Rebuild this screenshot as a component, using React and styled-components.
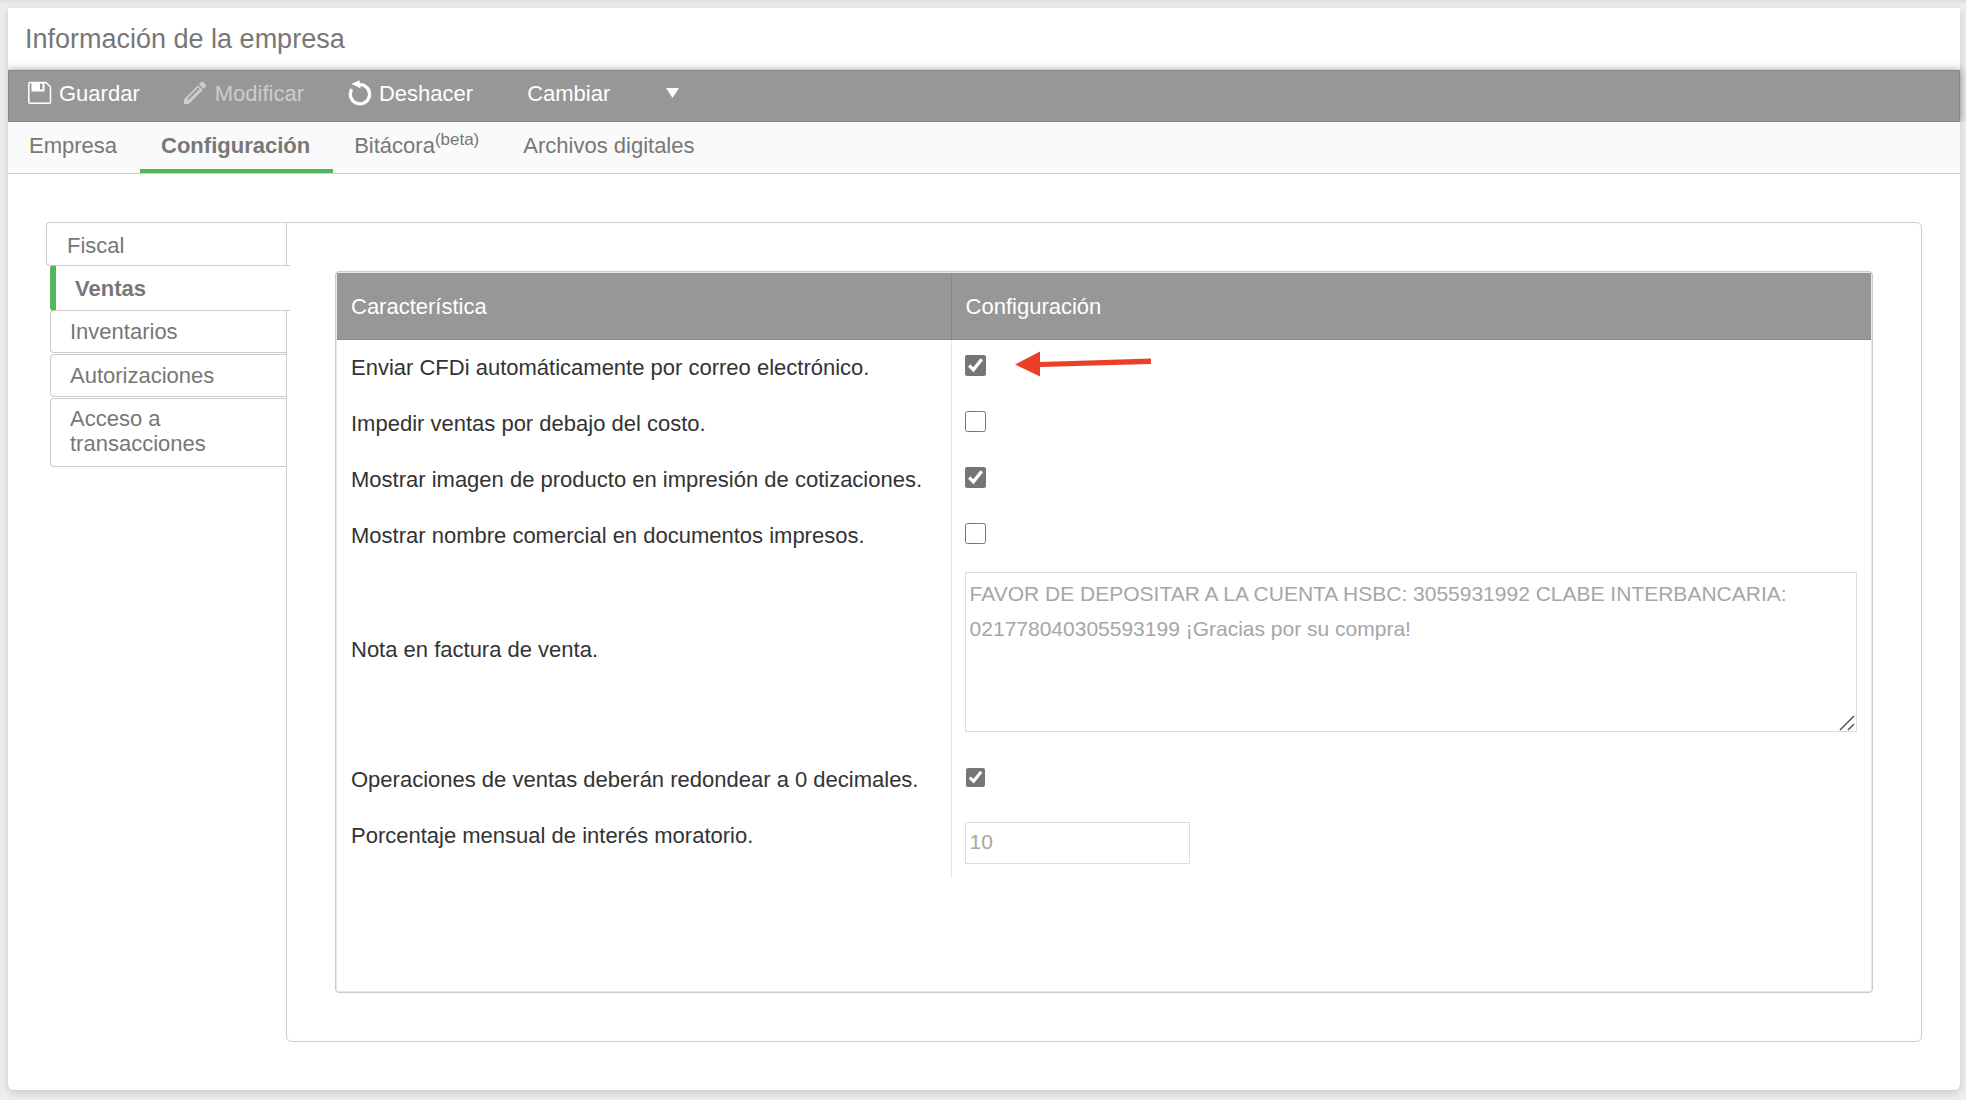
import React, { useState } from 'react'
import styled, { createGlobalStyle } from 'styled-components'

const primaryColor = '#52b65a'
const barColor = '#979797'
const textColor = '#777777'
const lineColor = '#cccccc'

const tabs = [
    { id: 'empresa', label: 'Empresa' },
    { id: 'configuracion', label: 'Configuración' },
    { id: 'bitacora', label: 'Bitácora', note: '(beta)' },
    { id: 'archivos', label: 'Archivos digitales' },
]

const sections = ['Fiscal', 'Ventas', 'Inventarios', 'Autorizaciones', 'Acceso a transacciones']

const note = 'FAVOR DE DEPOSITAR A LA CUENTA HSBC: 3055931992 CLABE INTERBANCARIA: 021778040305593199 ¡Gracias por su compra!'

function SaveIcon() {
    return (
        <svg width="24" height="24" viewBox="0 0 24 24" fill="none" aria-hidden="true">
            <path d="M2 1.5H18L22.5 6V21a1.2 1.2 0 0 1-1.2 1.2H2A1.2 1.2 0 0 1 .8 21V2.7A1.2 1.2 0 0 1 2 1.5Z" stroke="currentColor" strokeWidth="1.5" />
            <path fillRule="evenodd" d="M3.5 1H16.5V10.5H3.5ZM12 2.5V8.5H14.5V2.5Z" fill="currentColor" />
        </svg>
    )
}

function PencilIcon() {
    return (
        <svg width="24" height="24" viewBox="0 0 24 24" fill="none" aria-hidden="true">
            <path d="M0 23V18.2L14 4.3L18.8 9L4.8 23Z" fill="currentColor" />
            <path d="M15 3.2L17.2 1.2Q18.4 0.4 19.6 1.5L21.6 3.5Q22.6 4.6 21.7 5.8L19.7 8Z" fill="currentColor" />
            <path d="M4 18.2L15 7.2" stroke={barColor} strokeWidth="1.7" />
        </svg>
    )
}

function UndoIcon() {
    return (
        <svg width="24" height="26" viewBox="0 0 24 26" fill="none" aria-hidden="true">
            <path d="M3.8 9.2A9.6 9.6 0 1 0 11 4.7" stroke="currentColor" strokeWidth="3.3" />
            <path d="M3.5 3.8L11.5 0.3L12.5 8.5Z" fill="currentColor" />
        </svg>
    )
}

function App() {
    const [tab, setTab] = useState('configuracion')
    const [section, setSection] = useState('Ventas')
    const [values, setValues] = useState({ cfdi: true, costo: false, imagen: true, nombre: false, redondeo: true })

    const toggle = (name) => setValues({ ...values, [name]: !values[name] })

    const renderCheck = (name, label, small, extra) => (
        <tr>
            <LabelCell><label htmlFor={name}>{label}</label></LabelCell>
            <ValueCell>
                <Field>
                    <Check id={name} type="checkbox" $small={small} checked={values[name]} onChange={() => toggle(name)} />
                    {extra}
                </Field>
            </ValueCell>
        </tr>
    )

    return (
        <Page>
            <GlobalStyle />
            <Title>Información de la empresa</Title>

            <Toolbar>
                <Tool type="button"><SaveIcon />Guardar</Tool>
                <Tool type="button" disabled><PencilIcon />Modificar</Tool>
                <Tool type="button"><UndoIcon />Deshacer</Tool>
                <MenuTool type="button" aria-haspopup="menu">
                    Cambiar
                    <svg width="13" height="10" viewBox="0 0 13 10" aria-hidden="true">
                        <path d="M0 0H13L6.5 10Z" fill="currentColor" />
                    </svg>
                </MenuTool>
            </Toolbar>

            <Tabs>
                {tabs.map(item => (
                    <Tab key={item.id} type="button" $active={tab === item.id} onClick={() => setTab(item.id)}>
                        {item.label}{item.note ? <sup>{item.note}</sup> : null}
                    </Tab>
                ))}
            </Tabs>

            <Content>
                <Sidebar>
                    {sections.map(name => (
                        <SideTab key={name} type="button" $active={section === name} onClick={() => setSection(name)}>
                            {name}
                        </SideTab>
                    ))}
                </Sidebar>

                <Panel>
                    <TableFrame>
                        <Table>
                            <thead>
                                <tr>
                                    <HeadCell scope="col" $width="40%">Característica</HeadCell>
                                    <HeadCell scope="col">Configuración</HeadCell>
                                </tr>
                            </thead>
                            <tbody>
                                {renderCheck('cfdi', 'Enviar CFDi automáticamente por correo electrónico.', false, (
                                    <svg width="137" height="30" viewBox="0 0 137 30" aria-hidden="true">
                                        <path d="M0 13.5L25 0.5V11L136 7.5V13L25 16V25.5Z" fill="#ea4027" />
                                    </svg>
                                ))}
                                {renderCheck('costo', 'Impedir ventas por debajo del costo.')}
                                {renderCheck('imagen', 'Mostrar imagen de producto en impresión de cotizaciones.')}
                                {renderCheck('nombre', 'Mostrar nombre comercial en documentos impresos.')}
                                <tr>
                                    <NoteLabelCell><label htmlFor="nota">Nota en factura de venta.</label></NoteLabelCell>
                                    <NoteCell>
                                        <NoteBox>
                                            <Note id="nota" defaultValue={note} readOnly />
                                            <Grip width="16" height="16" viewBox="0 0 16 16" aria-hidden="true">
                                                <path d="M1 15L15 1M9 15L15 9" stroke="#555555" strokeWidth="1.5" />
                                            </Grip>
                                        </NoteBox>
                                    </NoteCell>
                                </tr>
                                {renderCheck('redondeo', 'Operaciones de ventas deberán redondear a 0 decimales.', true)}
                                <tr>
                                    <LabelCell><label htmlFor="interes">Porcentaje mensual de interés moratorio.</label></LabelCell>
                                    <InputCell><Input id="interes" type="text" defaultValue="10" readOnly /></InputCell>
                                </tr>
                            </tbody>
                        </Table>
                    </TableFrame>
                </Panel>
            </Content>
        </Page>
    )
}

const GlobalStyle = createGlobalStyle`
    * {
        box-sizing: border-box;
    }

    body {
        margin: 0;
        padding: 8px 6px 10px 8px;
        background: #eeeeee;
        box-shadow: inset 0 4px 4px -2px rgba(0,0,0,0.08);
        font-family: "Liberation Sans", Arial, sans-serif;
        font-size: 22px;
    }

    button, input, textarea {
        font-family: inherit;
    }
`

const Page = styled.main`
    background: #ffffff;
    color: ${textColor};
    border-radius: 0 0 6px 6px;
    box-shadow: 0 3px 8px rgba(0,0,0,0.16);
`

const Title = styled.h1`
    margin: 0;
    padding: 0 17px;
    font-size: 27px;
    font-weight: normal;
    line-height: 62px;
`

const Toolbar = styled.div`
    display: flex;
    align-items: center;
    gap: 44px;
    height: 52px;
    padding: 0 19px 4px;
    background: ${barColor};
    border: 1px solid #888888;
    box-shadow: 0 0 8px rgba(0,0,0,0.4);
    clip-path: inset(-8px -6px 0 0);
`

const Tool = styled.button`
    display: flex;
    align-items: center;
    gap: 7px;
    padding: 0;
    border: 0;
    background: transparent;
    color: #ffffff;
    font-size: 22px;
    line-height: 26px;
    cursor: pointer;

    &:disabled {
        color: #cccccc;
        cursor: default;
    }

    svg {
        margin-bottom: 2px;
    }
`

const MenuTool = styled(Tool)`
    gap: 56px;
    margin-left: 10px;
`

const Tabs = styled.nav`
    display: flex;
    height: 52px;
    background: #fafafa;
    border-bottom: 1px solid ${lineColor};
`

const Tab = styled.button`
    padding: 0 23px 0 21px;
    border: 0;
    border-bottom: 4px solid ${props => props.$active ? primaryColor : 'transparent'};
    background: transparent;
    color: ${textColor};
    font-size: 22px;
    font-weight: ${props => props.$active ? 'bold' : 'normal'};
    line-height: 26px;
    cursor: pointer;

    sup {
        font-size: 17px;
        line-height: 0;
    }
`

const Content = styled.div`
    display: flex;
    align-items: flex-start;
    padding: 48px 38px;
`

const Sidebar = styled.nav`
    display: flex;
    flex-direction: column;
    width: 240px;
`

const SideTab = styled.button`
    position: relative;
    margin: 1px -1px 0 4px;
    padding: 8px 19px;
    border: 1px solid ${lineColor};
    border-right: 0;
    border-radius: 4px 0 0 4px;
    background: transparent;
    color: ${textColor};
    font-size: 22px;
    line-height: 25px;
    text-align: left;
    cursor: pointer;

    &:first-child {
        margin: 0;
        padding: 10px 20px 7px;
    }

    &:last-child {
        padding: 7px 19px 10px;
    }

    ${props => props.$active && `
        z-index: 1;
        margin: -1px -4px -2px 4px;
        padding: 10px 19px 9px;
        border-left: 6px solid ${primaryColor};
        background: #ffffff;
        font-weight: bold;
    `}
`

const Panel = styled.section`
    flex: 1;
    min-width: 0;
    padding: 48px;
    border: 1px solid ${lineColor};
    border-radius: 0 6px 6px 6px;
`

const TableFrame = styled.div`
    padding: 1px 1px 114px;
    border: 1px solid ${lineColor};
    border-radius: 4px;
    box-shadow: inset 0 0 0 1px #e8e8e8;
`

const Table = styled.table`
    width: 100%;
    border-collapse: separate;
    border-spacing: 0;
    table-layout: fixed;
    color: #333333;
    line-height: 26px;
`

const HeadCell = styled.th`
    width: ${props => props.$width || 'auto'};
    height: 67px;
    padding: 2px 14px 0;
    background: ${barColor};
    border-bottom: 1px solid #888888;
    color: #ffffff;
    font-weight: normal;
    text-align: left;

    & + & {
        border-left: 1px solid #888888;
    }
`

const LabelCell = styled.td`
    height: 56px;
    padding: 15px 0 13px 14px;
    vertical-align: top;
    white-space: nowrap;
`

const ValueCell = styled.td`
    padding: 0 14px 5px 13px;
    border-left: 1px solid #e6e6e6;
`

const Field = styled.div`
    display: flex;
    align-items: center;
    gap: 29px;
`

const Check = styled.input`
    width: ${props => props.$small ? '19px' : '21px'};
    height: ${props => props.$small ? '19px' : '21px'};
    margin: ${props => props.$small ? '1px' : '0'};
    accent-color: #767676;
`

const NoteLabelCell = styled(LabelCell)`
    padding-bottom: 32px;
    vertical-align: middle;
`

const NoteCell = styled(ValueCell)`
    padding-top: 8px;
    padding-bottom: 20px;
`

const NoteBox = styled.div`
    position: relative;
`

const Note = styled.textarea`
    display: block;
    width: 100%;
    height: 160px;
    padding: 3px 4px;
    border: 1px solid #dddddd;
    outline: none;
    resize: none;
    color: #a6a6a6;
    font-size: 21px;
    line-height: 35px;
`

const Grip = styled.svg`
    position: absolute;
    right: 2px;
    bottom: 1px;
`

const InputCell = styled(ValueCell)`
    padding-top: 14px;
    padding-bottom: 14px;
`

const Input = styled.input`
    display: block;
    width: 225px;
    height: 42px;
    padding: 0 4px 2px;
    border: 1px solid #dddddd;
    outline: none;
    color: #a6a6a6;
    font-size: 21px;
`

export default App
